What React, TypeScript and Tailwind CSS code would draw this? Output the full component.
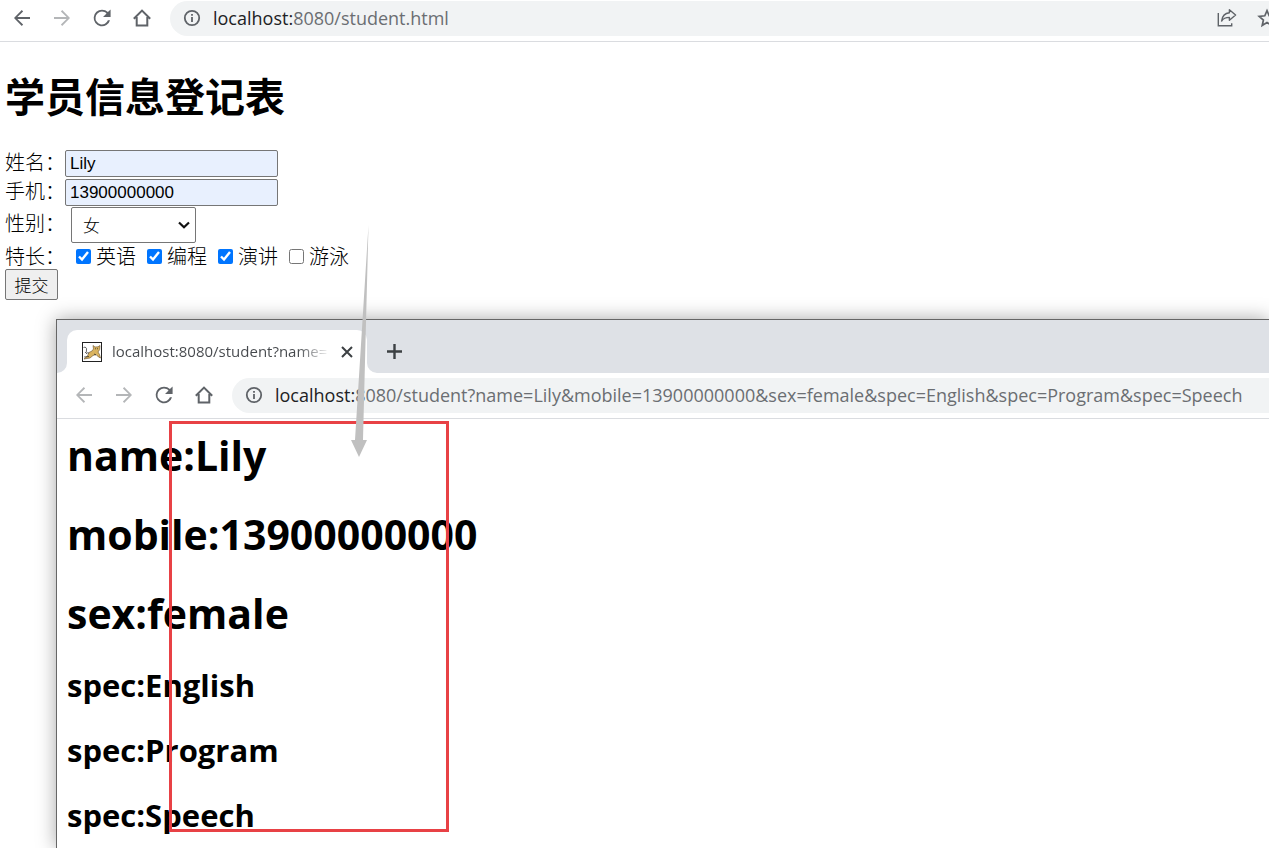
import type { ReactNode } from "react";

const icon = "h-6 w-6 shrink-0";

function BackIcon() {
  return (
    <svg viewBox="0 0 24 24" className={icon} fill="currentColor" aria-hidden="true">
      <path d="M20 11.1H7.4l5.7-5.7L11.8 4 4 12l7.8 8 1.3-1.4-5.7-5.7H20z" />
    </svg>
  );
}

function ForwardIcon() {
  return (
    <svg viewBox="0 0 24 24" className={icon} fill="currentColor" aria-hidden="true">
      <path d="M4 11.1h12.6l-5.7-5.7L12.2 4l7.8 8-7.8 8-1.3-1.4 5.7-5.7H4z" />
    </svg>
  );
}

function ReloadIcon() {
  return (
    <svg viewBox="0 0 24 24" className={icon} fill="currentColor" aria-hidden="true">
      <path d="M17.9 6.1A8.3 8.3 0 0 0 12 3.700a8.300 8.300 0 1 0 8 10.500h-2.100A6.400 6.400 0 1 1 12 5.600c1.800 0 3.300.7 4.500 1.900L13 11h7.600V3.500z" />
    </svg>
  );
}

function HomeIcon() {
  return (
    <svg viewBox="0 0 24 24" className={icon} fill="none" stroke="currentColor" strokeWidth="2" aria-hidden="true">
      <path d="M3.800 12.800 12 4.600l8.200 8.200M6.700 11v8.600h10.600V11" />
    </svg>
  );
}

function InfoIcon() {
  return (
    <svg viewBox="0 0 18 18" className="h-[18px] w-[18px] shrink-0 text-[#5f6368]" aria-hidden="true">
      <circle cx="9" cy="9" r="7.2" fill="none" stroke="currentColor" strokeWidth="1.8" />
      <path d="M8.1 8h1.8v5H8.1zM8.1 5h1.8v1.8H8.1z" fill="currentColor" />
    </svg>
  );
}

function ShareIcon() {
  return (
    <svg viewBox="0 0 20 20" className="h-5 w-5" fill="none" stroke="currentColor" strokeWidth="1.4" aria-hidden="true">
      <path d="M1.300 5v12.700h13.400v-2.500" />
      <path d="M12.400 1.800 18.600 7l-6.200 5.200V9.400c-3.600 0-6 .8-7.800 3.600.6-4.400 3.200-7.800 7.800-8.200z" strokeLinejoin="round" />
    </svg>
  );
}

function StarIcon() {
  return (
    <svg viewBox="0 0 20 20" className="h-5 w-5 shrink-0" fill="none" stroke="currentColor" strokeWidth="1.7" aria-hidden="true">
      <path d="m10 2.600 2.200 5.200 5.600.5-4.200 3.700 1.200 5.500L10 14.600l-4.800 2.900 1.200-5.500-4.200-3.700 5.600-.5z" />
    </svg>
  );
}

function TomcatIcon() {
  return (
    <svg viewBox="0 0 20 20" className="h-5 w-5 shrink-0" aria-hidden="true">
      <rect x="0.500" y="0.500" width="19" height="19" fill="#fff" stroke="#222" />
      <path d="M11 3.500 13 5l3-.2 2-1.300-.3 4L16 10l1.500 2.500 1 3.500-2-1-2.500-2.500-3 1L8 16l-6 1 3.500-3L7 10.500 10 9l1.500-2z" fill="#d9b35f" stroke="#6b5128" strokeWidth=".6" />
      <path d="M1.500 5.500c2-1 3.500.5 3 2.500s0 3 2.500 3M3 10l2 2m-3 3 5-.5m6-8 1 .5m2-.5-1 .5m-3 5 2 1" fill="none" stroke="#222" strokeWidth=".7" />
    </svg>
  );
}

function Toolbar({ host, path, backMuted, children }: { host: string; path: string; backMuted?: boolean; children?: ReactNode }) {
  return (
    <nav className="flex items-center" aria-label="Browser toolbar">
      <div className="flex shrink-0 items-center gap-4 pb-px text-[#5f6368]">
        <button type="button" aria-label="Back" className={backMuted ? "text-[#b4b6b8]" : ""}><BackIcon /></button>
        <button type="button" aria-label="Forward" className="text-[#b4b6b8]"><ForwardIcon /></button>
        <button type="button" aria-label="Reload"><ReloadIcon /></button>
        <button type="button" aria-label="Home"><HomeIcon /></button>
      </div>
      <div className="ml-4 flex h-[35px] min-w-0 flex-1 items-center rounded-l-full bg-[#f1f3f4] pb-px pl-[13px]">
        <InfoIcon />
        <span className="ml-3 flex-1 whitespace-nowrap text-[18px] leading-6 text-[#6b6e72]">
          <span className="text-[#202124]">{host}</span>{path}
        </span>
        {children}
      </div>
    </nav>
  );
}

const specialties = [
  { label: "英语", value: "English", checked: true },
  { label: "编程", value: "Program", checked: true },
  { label: "演讲", value: "Speech", checked: true },
  { label: "游泳", value: "Swimming", checked: false },
];

const textField =
  "h-[27px] w-[213px] rounded-[2px] border border-[#767676] bg-[#e8f0fe] px-1 font-['Liberation_Sans',Arial,sans-serif] text-[17px] font-normal";

function StudentForm() {
  return (
    <main className="px-[5px] pt-7 font-['Noto_Sans_CJK_SC',sans-serif] text-[20px] font-light text-black">
      <h1 className="text-[40px] leading-[50px] font-bold">学员信息登记表</h1>
      <form className="mt-[29px]" onSubmit={(event) => event.preventDefault()}>
        <div className="flex h-[29px] items-center">
          <label htmlFor="name" className="w-[60px] pb-1 leading-6">姓名：</label>
          <input id="name" type="text" defaultValue="Lily" className={textField} />
        </div>
        <div className="flex h-[29px] items-center">
          <label htmlFor="mobile" className="w-[60px] pb-1 leading-6">手机：</label>
          <input id="mobile" type="text" defaultValue="13900000000" className={textField} />
        </div>
        <div className="flex h-9 items-center">
          <label htmlFor="sex" className="w-[66px] pb-1 leading-6">性别：</label>
          <div className="relative flex items-center">
            <select id="sex" defaultValue="female" className="h-9 w-[125px] appearance-none rounded-[2px] border border-[#767676] bg-white pl-[11px] text-[17px]">
              <option value="male">男</option>
              <option value="female">女</option>
            </select>
            <svg viewBox="0 0 12 8" className="pointer-events-none absolute right-[6px] h-2 w-3" fill="none" stroke="#111" strokeWidth="2.200" aria-hidden="true">
              <path d="m1 1.500 5 4.800 5-4.800" />
            </svg>
          </div>
        </div>
        <fieldset className="flex">
          <legend className="float-left w-[71px] leading-[26px]">特长：</legend>
          <div className="flex gap-[11px]">
            {specialties.map(({ label, value, checked }) => (
              <label key={value} className="flex items-center gap-[5px] leading-[26px]">
                <input type="checkbox" name="spec" value={value} defaultChecked={checked} className="h-[15px] w-[15px] accent-[#0075ff]" />
                {label}
              </label>
            ))}
          </div>
        </fieldset>
        <button type="submit" className="block h-[31px] w-[53px] rounded-[2px] border border-[#767676] bg-[#efefef] text-[17px] leading-7">
          提交
        </button>
      </form>
    </main>
  );
}

function ResultWindow() {
  return (
    <section className="relative mt-[19px] ml-14 flex flex-1 flex-col border-t border-l border-[#666] bg-white shadow-[0_0_18px_rgba(0,0,0,0.35)]">
      <header className="flex h-[53px] items-end bg-[#dee1e6]">
        <svg viewBox="0 0 10 10" className="h-[10px] w-[10px] text-white" fill="currentColor" aria-hidden="true"><path d="M10 0v10H0A10 10 0 0 0 10 0" /></svg>
        <div className="flex h-[43px] w-[300px] items-center rounded-t-[10px] bg-white pl-[15px]">
          <TomcatIcon />
          <span className="ml-[10px] w-[218px] overflow-hidden bg-gradient-to-r from-[#45484c] from-85% to-transparent bg-clip-text text-[15px] whitespace-nowrap text-transparent">
            localhost:8080/student?name=
          </span>
          <button type="button" aria-label="Close tab" className="ml-[11px] text-[#3c4043]">
            <svg viewBox="0 0 12 12" className="h-3 w-3" stroke="currentColor" strokeWidth="2" aria-hidden="true"><path d="m1 1 10 10M11 1 1 11" /></svg>
          </button>
        </div>
        <svg viewBox="0 0 10 10" className="h-[10px] w-[10px] text-white" fill="currentColor" aria-hidden="true"><path d="M0 0v10h10A10 10 0 0 1 0 0" /></svg>
        <button type="button" aria-label="New tab" className="mb-[14px] ml-[10px] text-[#3c4043]">
          <svg viewBox="0 0 15 15" className="h-[15px] w-[15px]" stroke="currentColor" strokeWidth="2.400" aria-hidden="true"><path d="M7.500 0v15M0 7.500h15" /></svg>
        </button>
      </header>
      <div className="border-b border-[#dadce0] py-[5px] pl-[15px]">
        <Toolbar host="localhost:" path="8080/student?name=Lily&mobile=13900000000&sex=female&spec=English&spec=Program&spec=Speech" backMuted />
      </div>
      <div className="pt-2 pl-[10px] font-bold text-black">
        <h1 className="mb-[23px] text-[41px] leading-[56px]">name:Lily</h1>
        <h1 className="mb-[23px] text-[41px] leading-[56px]">mobile:13900000000</h1>
        <h1 className="mb-6 text-[41px] leading-[56px]">sex:female</h1>
        <h2 className="mb-[25px] text-[31px] leading-10">spec:English</h2>
        <h2 className="mb-[25px] text-[31px] leading-10">spec:Program</h2>
        <h2 className="text-[31px] leading-10">spec:Speech</h2>
      </div>
      <div className="pointer-events-none absolute top-[101px] left-[112px] h-[411px] w-[280px] border-3 border-[#e84145]" />
      <svg viewBox="0 0 20 232" className="pointer-events-none absolute -top-[95px] left-[293px] h-[232px] w-5" fill="#c0c0c0" aria-hidden="true">
        <path d="M18.500 0 13 215h4l-8 17-8-17h4z" />
      </svg>
    </section>
  );
}

export default function App() {
  return (
    <div className="flex h-screen flex-col overflow-hidden bg-white font-['Open_Sans','Noto_Sans_CJK_SC',sans-serif]">
      <div className="border-b border-[#dadce0] pt-px pb-[5px] pl-[10px]">
        <Toolbar host="localhost:" path="8080/student.html">
          <div className="-mr-2 flex items-center gap-5 text-[#5f6368]">
            <button type="button" aria-label="Share"><ShareIcon /></button>
            <button type="button" aria-label="Bookmark"><StarIcon /></button>
          </div>
        </Toolbar>
      </div>
      <StudentForm />
      <ResultWindow />
    </div>
  );
}
